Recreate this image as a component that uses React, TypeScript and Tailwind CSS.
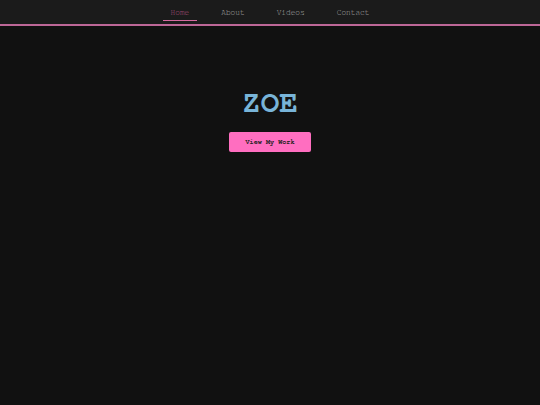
export default function App() {
  const items = ["Home", "About", "Videos", "Contact"];
  return (
    <div className="min-h-[405px] w-full bg-[#111111]" style={{ fontFamily: '"TeX Gyre Cursor", FreeMono, "Courier New", monospace' }}>
      <nav className="h-[24px] bg-[#1b1b1b] flex justify-center items-start">
        <ul className="flex gap-[16px] pt-[7px]">
          {items.map((it, i) => (
            <li
              key={it}
              className={
                "px-[8px] h-[14px] text-[7.8px] leading-[12px] " +
                (i === 0 ? "text-[#b85585] border-b border-b-[#d56a9f]" : "text-[#b8b8b8]")
              }
            >
              {it}
            </li>
          ))}
        </ul>
      </nav>
      <div className="h-[2px] bg-[#bd6797]" />
      <main className="flex flex-col items-center pt-[57px]">
        <h1 className="text-[31px] leading-[34px] font-bold text-[#78b4d8]">ZOE</h1>
        <button className="mt-[15px] w-[82px] h-[20px] rounded-[2px] bg-[#ff6ec0] text-[6.8px] font-bold text-[#222]">
          View My Work
        </button>
      </main>
    </div>
  );
}
